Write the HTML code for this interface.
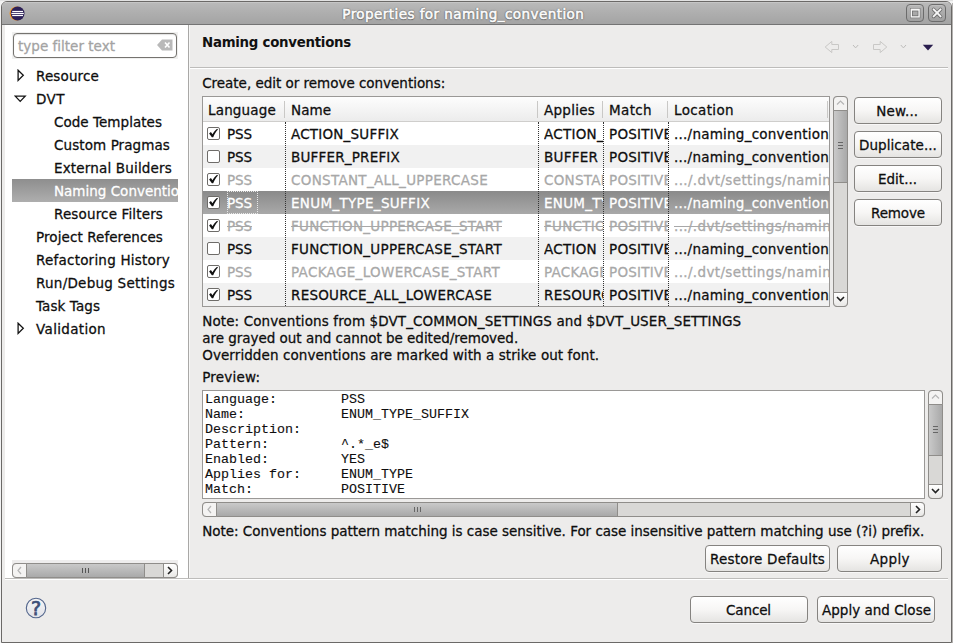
<!DOCTYPE html>
<html><head><meta charset="utf-8"><title>Properties for naming_convention</title>
<style>
html,body{margin:0;padding:0;background:#fff;}
body{width:953px;height:643px;overflow:hidden;position:relative;font-family:'DejaVu Sans','Liberation Sans',sans-serif;}
#win{position:absolute;left:0;top:0;width:953px;height:643px;overflow:hidden;}
#win div,#win span,#win svg{position:absolute;box-sizing:border-box;}
#win span{white-space:pre;-webkit-text-stroke:0.27px;}
.btn{border:1px solid #858380;border-radius:4px;background:linear-gradient(#ffffff,#f7f6f5 50%,#e5e4e2);box-shadow:0 1px 0 rgba(255,255,255,.6);}
.strike{text-decoration:line-through;}

</style></head><body>
<div id="win">
<div style="left:0px;top:0px;width:953px;height:643px;background:#f3f3f3;"></div>
<div style="left:0px;top:0px;width:953px;height:1px;background:#e2e2e2;"></div>
<div style="left:952px;top:3px;width:1px;height:640px;background:#b4b2b0;"></div>
<div style="left:1px;top:1px;width:951px;height:642px;background:#edeceb;border:1px solid #6b6967;border-radius:6px 6px 0 0;"></div>
<div style="left:2px;top:2px;width:949px;height:23px;background:linear-gradient(#c6c6c6 0,#c6c6c6 1px,#b9b9b9 1px,#aeaeae 50%,#a4a4a4);border-radius:5px 5px 0 0;border-bottom:1px solid #747474;"></div>
<svg style="left:9px;top:6.4px" width="16" height="15" viewBox="0 0 16 15"><circle cx="7.6" cy="7.5" r="7" fill="#f7941e"/><circle cx="8.6" cy="7.5" r="6.9" fill="#2c2058"/><rect x="3.2" y="4.9" width="10.8" height="1.2" fill="#fff"/><rect x="2.4" y="6.9" width="12.4" height="1.2" fill="#fff"/><rect x="3.2" y="8.9" width="10.8" height="1.2" fill="#fff"/></svg>
<div style="left:906px;top:4px;width:18px;height:18px;border:1px solid #6c6c6c;border-radius:4px;background:linear-gradient(#b6b6b6,#a0a0a0);box-shadow:inset 0 1px 0 #c0c0c0;"></div>
<svg style="left:906px;top:4px" width="18" height="18" viewBox="0 0 18 18"><rect x="4" y="4" width="10.4" height="10.2" fill="#707070"/><rect x="4.6" y="4.6" width="9.2" height="9" fill="#f6f6f6"/><rect x="6" y="6.6" width="6.4" height="5.6" fill="#707070"/><rect x="6.8" y="7.4" width="4.8" height="4" fill="#a9a9a9"/></svg>
<div style="left:928px;top:4px;width:18px;height:18px;border:1px solid #6c6c6c;border-radius:4px;background:linear-gradient(#b6b6b6,#a0a0a0);box-shadow:inset 0 1px 0 #c0c0c0;"></div>
<svg style="left:928px;top:4px" width="18" height="18" viewBox="0 0 18 18"><path d="M5.6 5.4 L12.6 12.4 M12.6 5.4 L5.6 12.4" stroke="#6f6f6f" stroke-width="3.6" stroke-linecap="round" fill="none"/><path d="M5.6 5.4 L12.6 12.4 M12.6 5.4 L5.6 12.4" stroke="#f6f6f6" stroke-width="2" stroke-linecap="round" fill="none"/></svg>
<div style="left:5px;top:25px;width:183px;height:553px;background:#fff;"></div>
<div style="left:188px;top:25px;width:1px;height:553px;background:#a9a8a6;"></div>
<div style="left:189px;top:25px;width:1px;height:553px;background:#f7f7f6;"></div>
<div style="left:12px;top:32px;width:166px;height:27px;background:#f0f0ef;"></div>
<div style="left:13px;top:33px;width:164px;height:25px;border:1px solid #75736f;border-radius:4px;background:#fff;box-shadow:inset 0 1px 1px rgba(0,0,0,.12);"></div>
<svg style="left:156px;top:38px" width="18" height="14" viewBox="0 0 18 14"><path d="M1 7 L6 1.5 H16.5 V12.5 H6 Z" fill="#b9b9b9"/><path d="M9 4.5 L13.5 9.5 M13.5 4.5 L9 9.5" stroke="#fff" stroke-width="1.6"/></svg>
<div style="left:12px;top:179px;width:166px;height:23px;background:linear-gradient(#8e8e8e,#aeaeae);"></div>
<svg style="left:16.5px;top:69px" width="9" height="13" viewBox="0 0 9 13"><path d="M1.1 1.2 L6.3 6.3 L1.1 11.4 Z" fill="#fff" stroke="#141414" stroke-width="1.3" stroke-linejoin="miter"/></svg>
<svg style="left:13.5px;top:94.5px" width="13" height="9" viewBox="0 0 13 9"><path d="M1.2 1.1 L11.2 1.1 L6.2 6.4 Z" fill="#fff" stroke="#141414" stroke-width="1.3" stroke-linejoin="miter"/></svg>
<svg style="left:16.5px;top:322px" width="9" height="13" viewBox="0 0 9 13"><path d="M1.1 1.2 L6.3 6.3 L1.1 11.4 Z" fill="#fff" stroke="#141414" stroke-width="1.3" stroke-linejoin="miter"/></svg>
<div style="left:12px;top:560px;width:166px;height:4px;background:#eeeded;"></div>
<div style="left:12px;top:563px;width:166px;height:15px;border:1px solid #8f8d8a;border-radius:4px;background:#d9d8d6;"></div>
<div style="left:26px;top:563px;width:119px;height:15px;border:1px solid #8f8d8a;background:linear-gradient(#c9c9c9,#a9a9a9);"></div>
<div style="left:12px;top:563px;width:15px;height:15px;border:1px solid #8f8d8a;border-radius:4px 0 0 4px;background:#f4f3f2;"></div>
<div style="left:163px;top:563px;width:15px;height:15px;border:1px solid #8f8d8a;border-radius:0 4px 4px 0;background:linear-gradient(#ffffff,#e9e8e6);"></div>
<svg style="left:12px;top:563px" width="166" height="15" viewBox="0 0 166 15"><path d="M9 4 L6 7.5 L9 11" stroke="#b5b5b5" stroke-width="1.2" fill="none"/><path d="M156 4 L159.5 7.5 L156 11" stroke="#222" stroke-width="1.6" fill="none"/><path d="M70.5 5 V10 M73.5 5 V10 M76.5 5 V10" stroke="#555" stroke-width="1"/></svg>
<div style="left:5px;top:578px;width:943px;height:1px;background:#bdbcba;"></div>
<div style="left:5px;top:579px;width:943px;height:1px;background:#ffffff;"></div>
<svg style="left:24px;top:596px" width="24" height="24" viewBox="0 0 24 24"><defs><linearGradient id="hg" x1="0" y1="0" x2="0" y2="1"><stop offset="0" stop-color="#f6f6f7"/><stop offset="1" stop-color="#e1e2e8"/></linearGradient></defs><circle cx="12" cy="12" r="9.7" fill="url(#hg)" stroke="#51648b" stroke-width="1.1"/></svg>
<div style="left:190px;top:67px;width:758px;height:1px;background:#bdbcba;"></div>
<div style="left:190px;top:68px;width:758px;height:1px;background:#ffffff;"></div>
<svg style="left:810px;top:25px" width="140" height="50" viewBox="0 0 140 50"><path d="M15.2 22 L21.8 16.4 V19.5 H28.5 V24.5 H21.8 V27.6 Z" fill="none" stroke="#c9c8c6" stroke-width="1"/><path d="M43 20 L45.6 22.9 L48.2 20" fill="none" stroke="#bdbcba" stroke-width="1"/><path d="M76.8 22 L70.2 16.4 V19.5 H63.5 V24.5 H70.2 V27.6 Z" fill="none" stroke="#c9c8c6" stroke-width="1"/><path d="M90.8 20 L93.4 22.9 L96 20" fill="none" stroke="#bdbcba" stroke-width="1"/><path d="M112.8 19.8 H123.2 L118 25.4 Z" fill="#2a1e4e"/></svg>
<div style="left:202px;top:96px;width:628px;height:211px;border:1px solid #9a9896;background:#fff;"></div>
<div style="left:203px;top:97px;width:626px;height:25px;background:linear-gradient(#fdfdfd,#ececec);border-bottom:1px solid #cfcecc;"></div>
<div style="left:207px;top:127px;width:13px;height:13px;border:1px solid #6e6c69;border-radius:2px;background:#fff;"></div>
<svg style="left:207px;top:126px" width="14" height="14" viewBox="0 0 14 14"><path d="M2.1 7.5 L3.9 6 L5.5 8.2 C6.6 6.2 8.2 4.2 10.1 2.7 L11 3.6 C9.1 5.6 7.4 8.2 6.2 11.2 L4.9 11.2 Z" fill="#111"/></svg>
<div style="left:203px;top:145px;width:626px;height:23px;background:#f1f1f1;"></div>
<div style="left:207px;top:150px;width:13px;height:13px;border:1px solid #6e6c69;border-radius:2px;background:#fff;"></div>
<div style="left:207px;top:173px;width:13px;height:13px;border:1px solid #6e6c69;border-radius:2px;background:#fff;"></div>
<svg style="left:207px;top:172px" width="14" height="14" viewBox="0 0 14 14"><path d="M2.1 7.5 L3.9 6 L5.5 8.2 C6.6 6.2 8.2 4.2 10.1 2.7 L11 3.6 C9.1 5.6 7.4 8.2 6.2 11.2 L4.9 11.2 Z" fill="#111"/></svg>
<div style="left:203px;top:191px;width:626px;height:23px;background:linear-gradient(#8a8a8a,#a9a9a9);"></div>
<div style="left:207px;top:196px;width:13px;height:13px;border:1px solid #6e6c69;border-radius:2px;background:#fff;"></div>
<svg style="left:207px;top:195px" width="14" height="14" viewBox="0 0 14 14"><path d="M2.1 7.5 L3.9 6 L5.5 8.2 C6.6 6.2 8.2 4.2 10.1 2.7 L11 3.6 C9.1 5.6 7.4 8.2 6.2 11.2 L4.9 11.2 Z" fill="#111"/></svg>
<div style="left:207px;top:219px;width:13px;height:13px;border:1px solid #6e6c69;border-radius:2px;background:#fff;"></div>
<svg style="left:207px;top:218px" width="14" height="14" viewBox="0 0 14 14"><path d="M2.1 7.5 L3.9 6 L5.5 8.2 C6.6 6.2 8.2 4.2 10.1 2.7 L11 3.6 C9.1 5.6 7.4 8.2 6.2 11.2 L4.9 11.2 Z" fill="#111"/></svg>
<div style="left:203px;top:237px;width:626px;height:23px;background:#f1f1f1;"></div>
<div style="left:207px;top:242px;width:13px;height:13px;border:1px solid #6e6c69;border-radius:2px;background:#fff;"></div>
<div style="left:207px;top:265px;width:13px;height:13px;border:1px solid #6e6c69;border-radius:2px;background:#fff;"></div>
<svg style="left:207px;top:264px" width="14" height="14" viewBox="0 0 14 14"><path d="M2.1 7.5 L3.9 6 L5.5 8.2 C6.6 6.2 8.2 4.2 10.1 2.7 L11 3.6 C9.1 5.6 7.4 8.2 6.2 11.2 L4.9 11.2 Z" fill="#111"/></svg>
<div style="left:203px;top:283px;width:626px;height:23px;background:#f1f1f1;"></div>
<div style="left:207px;top:288px;width:13px;height:13px;border:1px solid #6e6c69;border-radius:2px;background:#fff;"></div>
<svg style="left:207px;top:287px" width="14" height="14" viewBox="0 0 14 14"><path d="M2.1 7.5 L3.9 6 L5.5 8.2 C6.6 6.2 8.2 4.2 10.1 2.7 L11 3.6 C9.1 5.6 7.4 8.2 6.2 11.2 L4.9 11.2 Z" fill="#111"/></svg>
<div style="left:284px;top:101px;width:1px;height:17px;background:#c9c8c6;"></div>
<div style="left:285px;top:122px;width:1px;height:184px;border-left:1px dotted #333;"></div>
<div style="left:537px;top:101px;width:1px;height:17px;background:#c9c8c6;"></div>
<div style="left:538px;top:122px;width:1px;height:184px;border-left:1px dotted #333;"></div>
<div style="left:602px;top:101px;width:1px;height:17px;background:#c9c8c6;"></div>
<div style="left:603px;top:122px;width:1px;height:184px;border-left:1px dotted #333;"></div>
<div style="left:667px;top:101px;width:1px;height:17px;background:#c9c8c6;"></div>
<div style="left:668px;top:122px;width:1px;height:184px;border-left:1px dotted #333;"></div>
<div style="left:827px;top:101px;width:1px;height:17px;background:#c9c8c6;"></div>
<div style="left:227px;top:191px;width:31px;height:23px;border:1px dotted #e8e8e8;"></div>
<div style="left:833px;top:96px;width:15px;height:211px;border:1px solid #8f8d8a;border-radius:4px;background:#d9d8d6;"></div>
<div style="left:833px;top:110px;width:15px;height:73px;border:1px solid #8f8d8a;background:linear-gradient(90deg,#c9c9c9,#a9a9a9);"></div>
<div style="left:833px;top:96px;width:15px;height:15px;border:1px solid #8f8d8a;border-radius:4px 4px 0 0;background:#f4f3f2;"></div>
<div style="left:833px;top:292px;width:15px;height:15px;border:1px solid #8f8d8a;border-radius:0 0 4px 4px;background:linear-gradient(#ffffff,#e9e8e6);"></div>
<svg style="left:833px;top:96px" width="15" height="211" viewBox="0 0 15 211"><path d="M4 8.5 L7.5 5 L11 8.5" stroke="#b5b5b5" stroke-width="1.2" fill="none"/><path d="M4 201 L7.5 204.5 L11 201" stroke="#222" stroke-width="1.6" fill="none"/><path d="M5 46.5 H10 M5 49.5 H10 M5 52.5 H10" stroke="#666" stroke-width="1"/></svg>
<div class="btn" style="left:854px;top:97px;width:88px;height:27px"></div>
<div class="btn" style="left:854px;top:131px;width:88px;height:27px"></div>
<div class="btn" style="left:854px;top:165px;width:88px;height:27px"></div>
<div class="btn" style="left:854px;top:199px;width:88px;height:27px"></div>
<div style="left:202px;top:390px;width:723px;height:109px;border:1px solid #9a9896;background:#fff;"></div>
<div style="left:928px;top:390px;width:15px;height:109px;border:1px solid #8f8d8a;border-radius:4px;background:#d9d8d6;"></div>
<div style="left:928px;top:404px;width:15px;height:52px;border:1px solid #8f8d8a;background:linear-gradient(90deg,#c9c9c9,#a9a9a9);"></div>
<div style="left:928px;top:390px;width:15px;height:15px;border:1px solid #8f8d8a;border-radius:4px 4px 0 0;background:#f4f3f2;"></div>
<div style="left:928px;top:484px;width:15px;height:15px;border:1px solid #8f8d8a;border-radius:0 0 4px 4px;background:linear-gradient(#ffffff,#e9e8e6);"></div>
<svg style="left:928px;top:390px" width="15" height="109" viewBox="0 0 15 109"><path d="M4 8.5 L7.5 5 L11 8.5" stroke="#b5b5b5" stroke-width="1.2" fill="none"/><path d="M4 99 L7.5 102.5 L11 99" stroke="#222" stroke-width="1.6" fill="none"/><path d="M5 36.5 H10 M5 39.5 H10 M5 42.5 H10" stroke="#666" stroke-width="1"/></svg>
<div style="left:202px;top:502px;width:723px;height:15px;border:1px solid #8f8d8a;border-radius:4px;background:#d9d8d6;"></div>
<div style="left:216px;top:502px;width:402px;height:15px;border:1px solid #8f8d8a;background:linear-gradient(#c9c9c9,#a9a9a9);"></div>
<div style="left:202px;top:502px;width:15px;height:15px;border:1px solid #8f8d8a;border-radius:4px 0 0 4px;background:#f4f3f2;"></div>
<div style="left:910px;top:502px;width:15px;height:15px;border:1px solid #8f8d8a;border-radius:0 4px 4px 0;background:linear-gradient(#ffffff,#e9e8e6);"></div>
<svg style="left:202px;top:502px" width="723" height="15" viewBox="0 0 723 15"><path d="M9 4 L6 7.5 L9 11" stroke="#b5b5b5" stroke-width="1.2" fill="none"/><path d="M714 4 L717.5 7.5 L714 11" stroke="#222" stroke-width="1.6" fill="none"/><path d="M212.5 5 V10 M215.5 5 V10 M218.5 5 V10" stroke="#666" stroke-width="1"/></svg>
<div class="btn" style="left:705px;top:545px;width:125px;height:27px"></div>
<div class="btn" style="left:837px;top:545px;width:105px;height:27px"></div>
<div class="btn" style="left:690px;top:596px;width:118px;height:27px"></div>
<div class="btn" style="left:817px;top:596px;width:118px;height:27px"></div>
<span style="left:342.3px;top:4.33px;font-size:13.5px;color:#fcfcfc;line-height:20px;letter-spacing:0.439px;-webkit-text-stroke:0.55px;text-shadow:0 1px 1px #5e5e5e,0 -1px 1px #8a8a8a,1px 0 1px #808080,-1px 0 1px #808080;">Properties for naming_convention</span>
<span style="left:18px;top:36.33px;font-size:13.5px;color:#a3a3a3;line-height:20px;letter-spacing:0.013px;">type filter text</span>
<span style="left:36px;top:66.33px;font-size:13.5px;color:#0e0e0e;line-height:20px;letter-spacing:0.135px;">Resource</span>
<span style="left:36px;top:89.33px;font-size:13.5px;color:#0e0e0e;line-height:20px;letter-spacing:0.453px;">DVT</span>
<span style="left:54px;top:112.33px;font-size:13.5px;color:#0e0e0e;line-height:20px;letter-spacing:0.036px;">Code Templates</span>
<span style="left:54px;top:135.33px;font-size:13.5px;color:#0e0e0e;line-height:20px;letter-spacing:0.088px;">Custom Pragmas</span>
<span style="left:54px;top:158.33px;font-size:13.5px;color:#0e0e0e;line-height:20px;letter-spacing:0.171px;">External Builders</span>
<span style="left:54px;top:181.33px;font-size:13.5px;color:#fff;line-height:20px;width:124px;overflow:hidden;">Naming Conventions</span>
<span style="left:54px;top:204.33px;font-size:13.5px;color:#0e0e0e;line-height:20px;letter-spacing:0.146px;">Resource Filters</span>
<span style="left:36px;top:227.33px;font-size:13.5px;color:#0e0e0e;line-height:20px;letter-spacing:0.083px;">Project References</span>
<span style="left:36px;top:250.33px;font-size:13.5px;color:#0e0e0e;line-height:20px;letter-spacing:0.220px;">Refactoring History</span>
<span style="left:36px;top:273.33px;font-size:13.5px;color:#0e0e0e;line-height:20px;letter-spacing:0.250px;">Run/Debug Settings</span>
<span style="left:36px;top:296.33px;font-size:13.5px;color:#0e0e0e;line-height:20px;letter-spacing:0.075px;">Task Tags</span>
<span style="left:36px;top:319.33px;font-size:13.5px;color:#0e0e0e;line-height:20px;letter-spacing:0.333px;">Validation</span>
<span style="left:31.0px;top:598.43px;font-size:19px;color:#3e5078;line-height:20px;-webkit-text-stroke:0.75px;">?</span>
<span style="left:202px;top:33.39px;font-size:13.33px;color:#111;line-height:20px;font-weight:700;letter-spacing:-0.253px;-webkit-text-stroke:0;">Naming conventions</span>
<span style="left:202.2px;top:73.33px;font-size:13.5px;color:#0e0e0e;line-height:20px;letter-spacing:-0.024px;">Create, edit or remove conventions:</span>
<span style="left:227px;top:124.33px;font-size:13.5px;color:#0e0e0e;line-height:20px;letter-spacing:-0.094px;">PSS</span>
<span style="left:291px;top:124.33px;font-size:13.5px;color:#0e0e0e;line-height:20px;letter-spacing:0.204px;">ACTION_SUFFIX</span>
<span style="left:544px;top:124.33px;font-size:13.5px;color:#0e0e0e;line-height:20px;width:59px;overflow:hidden;letter-spacing:0.25px;">ACTION_SUFFIX</span>
<span style="left:609px;top:124.33px;font-size:13.5px;color:#0e0e0e;line-height:20px;width:59px;overflow:hidden;letter-spacing:0.25px;">POSITIVE</span>
<span style="left:674px;top:124.33px;font-size:13.5px;color:#0e0e0e;line-height:20px;letter-spacing:0.239px;width:155px;overflow:hidden;">.../naming_convention</span>
<span style="left:227px;top:147.33px;font-size:13.5px;color:#0e0e0e;line-height:20px;letter-spacing:-0.094px;">PSS</span>
<span style="left:291px;top:147.33px;font-size:13.5px;color:#0e0e0e;line-height:20px;letter-spacing:0.201px;">BUFFER_PREFIX</span>
<span style="left:544px;top:147.33px;font-size:13.5px;color:#0e0e0e;line-height:20px;width:59px;overflow:hidden;letter-spacing:0.25px;">BUFFER</span>
<span style="left:609px;top:147.33px;font-size:13.5px;color:#0e0e0e;line-height:20px;width:59px;overflow:hidden;letter-spacing:0.25px;">POSITIVE</span>
<span style="left:674px;top:147.33px;font-size:13.5px;color:#0e0e0e;line-height:20px;letter-spacing:0.239px;width:155px;overflow:hidden;">.../naming_convention</span>
<span style="left:227px;top:170.33px;font-size:13.5px;color:#a8a8a8;line-height:20px;letter-spacing:-0.094px;">PSS</span>
<span style="left:291px;top:170.33px;font-size:13.5px;color:#a8a8a8;line-height:20px;letter-spacing:0.298px;">CONSTANT_ALL_UPPERCASE</span>
<span style="left:544px;top:170.33px;font-size:13.5px;color:#a8a8a8;line-height:20px;width:59px;overflow:hidden;letter-spacing:0.25px;">CONSTANT</span>
<span style="left:609px;top:170.33px;font-size:13.5px;color:#a8a8a8;line-height:20px;width:59px;overflow:hidden;letter-spacing:0.25px;">POSITIVE</span>
<span style="left:674px;top:170.33px;font-size:13.5px;color:#a8a8a8;line-height:20px;letter-spacing:0.360px;width:155px;overflow:hidden;">.../.dvt/settings/naming</span>
<span style="left:227px;top:193.33px;font-size:13.5px;color:#ffffff;line-height:20px;letter-spacing:-0.094px;">PSS</span>
<span style="left:291px;top:193.33px;font-size:13.5px;color:#ffffff;line-height:20px;letter-spacing:0.311px;">ENUM_TYPE_SUFFIX</span>
<span style="left:544px;top:193.33px;font-size:13.5px;color:#ffffff;line-height:20px;width:59px;overflow:hidden;letter-spacing:0.25px;">ENUM_TYPE</span>
<span style="left:609px;top:193.33px;font-size:13.5px;color:#ffffff;line-height:20px;width:59px;overflow:hidden;letter-spacing:0.25px;">POSITIVE</span>
<span style="left:674px;top:193.33px;font-size:13.5px;color:#ffffff;line-height:20px;letter-spacing:0.239px;width:155px;overflow:hidden;">.../naming_convention</span>
<span style="left:227px;top:216.33px;font-size:13.5px;color:#a8a8a8;line-height:20px;letter-spacing:-0.094px;text-decoration:line-through;">PSS</span>
<span style="left:291px;top:216.33px;font-size:13.5px;color:#a8a8a8;line-height:20px;letter-spacing:0.273px;text-decoration:line-through;">FUNCTION_UPPERCASE_START</span>
<span style="left:544px;top:216.33px;font-size:13.5px;color:#a8a8a8;line-height:20px;width:59px;overflow:hidden;text-decoration:line-through;letter-spacing:0.25px;">FUNCTION</span>
<span style="left:609px;top:216.33px;font-size:13.5px;color:#a8a8a8;line-height:20px;width:59px;overflow:hidden;text-decoration:line-through;letter-spacing:0.25px;">POSITIVE</span>
<span style="left:674px;top:216.33px;font-size:13.5px;color:#a8a8a8;line-height:20px;letter-spacing:0.360px;width:155px;overflow:hidden;text-decoration:line-through;">.../.dvt/settings/naming</span>
<span style="left:227px;top:239.33px;font-size:13.5px;color:#0e0e0e;line-height:20px;letter-spacing:-0.094px;">PSS</span>
<span style="left:291px;top:239.33px;font-size:13.5px;color:#0e0e0e;line-height:20px;letter-spacing:0.273px;">FUNCTION_UPPERCASE_START</span>
<span style="left:544px;top:239.33px;font-size:13.5px;color:#0e0e0e;line-height:20px;width:59px;overflow:hidden;letter-spacing:0.25px;">ACTION</span>
<span style="left:609px;top:239.33px;font-size:13.5px;color:#0e0e0e;line-height:20px;width:59px;overflow:hidden;letter-spacing:0.25px;">POSITIVE</span>
<span style="left:674px;top:239.33px;font-size:13.5px;color:#0e0e0e;line-height:20px;letter-spacing:0.239px;width:155px;overflow:hidden;">.../naming_convention</span>
<span style="left:227px;top:262.33px;font-size:13.5px;color:#a8a8a8;line-height:20px;letter-spacing:-0.094px;">PSS</span>
<span style="left:291px;top:262.33px;font-size:13.5px;color:#a8a8a8;line-height:20px;letter-spacing:0.327px;">PACKAGE_LOWERCASE_START</span>
<span style="left:544px;top:262.33px;font-size:13.5px;color:#a8a8a8;line-height:20px;width:59px;overflow:hidden;letter-spacing:0.25px;">PACKAGE</span>
<span style="left:609px;top:262.33px;font-size:13.5px;color:#a8a8a8;line-height:20px;width:59px;overflow:hidden;letter-spacing:0.25px;">POSITIVE</span>
<span style="left:674px;top:262.33px;font-size:13.5px;color:#a8a8a8;line-height:20px;letter-spacing:0.360px;width:155px;overflow:hidden;">.../.dvt/settings/naming</span>
<span style="left:227px;top:285.33px;font-size:13.5px;color:#0e0e0e;line-height:20px;letter-spacing:-0.094px;">PSS</span>
<span style="left:291px;top:285.33px;font-size:13.5px;color:#0e0e0e;line-height:20px;letter-spacing:0.252px;">RESOURCE_ALL_LOWERCASE</span>
<span style="left:544px;top:285.33px;font-size:13.5px;color:#0e0e0e;line-height:20px;width:59px;overflow:hidden;letter-spacing:0.25px;">RESOURCE</span>
<span style="left:609px;top:285.33px;font-size:13.5px;color:#0e0e0e;line-height:20px;width:59px;overflow:hidden;letter-spacing:0.25px;">POSITIVE</span>
<span style="left:674px;top:285.33px;font-size:13.5px;color:#0e0e0e;line-height:20px;letter-spacing:0.239px;width:155px;overflow:hidden;">.../naming_convention</span>
<span style="left:208px;top:100.33px;font-size:13.5px;color:#0e0e0e;line-height:20px;letter-spacing:0.172px;">Language</span>
<span style="left:291px;top:100.33px;font-size:13.5px;color:#0e0e0e;line-height:20px;letter-spacing:0.043px;">Name</span>
<span style="left:544px;top:100.33px;font-size:13.5px;color:#0e0e0e;line-height:20px;letter-spacing:0.254px;">Applies</span>
<span style="left:609px;top:100.33px;font-size:13.5px;color:#0e0e0e;line-height:20px;letter-spacing:0.359px;">Match</span>
<span style="left:674px;top:100.33px;font-size:13.5px;color:#0e0e0e;line-height:20px;letter-spacing:0.361px;">Location</span>
<span style="left:876.3px;top:101.33px;font-size:13.5px;color:#0e0e0e;line-height:20px;letter-spacing:0.151px;">New...</span>
<span style="left:859px;top:135.33px;font-size:13.5px;color:#0e0e0e;line-height:20px;letter-spacing:0.066px;">Duplicate...</span>
<span style="left:878px;top:169.33px;font-size:13.5px;color:#0e0e0e;line-height:20px;letter-spacing:-0.004px;">Edit...</span>
<span style="left:871px;top:203.33px;font-size:13.5px;color:#0e0e0e;line-height:20px;letter-spacing:-0.133px;">Remove</span>
<span style="left:202.2px;top:311.33px;font-size:13.5px;color:#0e0e0e;line-height:20px;letter-spacing:0.112px;">Note: Conventions from $DVT_COMMON_SETTINGS and $DVT_USER_SETTINGS</span>
<span style="left:202.2px;top:328.33px;font-size:13.5px;color:#0e0e0e;line-height:20px;letter-spacing:-0.024px;">are grayed out and cannot be edited/removed.</span>
<span style="left:202.2px;top:345.33px;font-size:13.5px;color:#0e0e0e;line-height:20px;letter-spacing:0.082px;">Overridden conventions are marked with a strike out font.</span>
<span style="left:202.2px;top:367.33px;font-size:13.5px;color:#0e0e0e;line-height:20px;letter-spacing:0.203px;">Preview:</span>
<span style="left:205px;top:390.39px;font-size:13.33px;color:#0e0e0e;line-height:20px;font-family:'Liberation Mono','DejaVu Sans Mono',monospace;-webkit-text-stroke:0.1px;">Language:</span>
<span style="left:341px;top:390.39px;font-size:13.33px;color:#0e0e0e;line-height:20px;font-family:'Liberation Mono','DejaVu Sans Mono',monospace;-webkit-text-stroke:0.1px;">PSS</span>
<span style="left:205px;top:405.39px;font-size:13.33px;color:#0e0e0e;line-height:20px;font-family:'Liberation Mono','DejaVu Sans Mono',monospace;-webkit-text-stroke:0.1px;">Name:</span>
<span style="left:341px;top:405.39px;font-size:13.33px;color:#0e0e0e;line-height:20px;font-family:'Liberation Mono','DejaVu Sans Mono',monospace;-webkit-text-stroke:0.1px;">ENUM_TYPE_SUFFIX</span>
<span style="left:205px;top:420.39px;font-size:13.33px;color:#0e0e0e;line-height:20px;font-family:'Liberation Mono','DejaVu Sans Mono',monospace;-webkit-text-stroke:0.1px;">Description:</span>
<span style="left:205px;top:435.39px;font-size:13.33px;color:#0e0e0e;line-height:20px;font-family:'Liberation Mono','DejaVu Sans Mono',monospace;-webkit-text-stroke:0.1px;">Pattern:</span>
<span style="left:341px;top:435.39px;font-size:13.33px;color:#0e0e0e;line-height:20px;font-family:'Liberation Mono','DejaVu Sans Mono',monospace;-webkit-text-stroke:0.1px;">^.*_e$</span>
<span style="left:205px;top:450.39px;font-size:13.33px;color:#0e0e0e;line-height:20px;font-family:'Liberation Mono','DejaVu Sans Mono',monospace;-webkit-text-stroke:0.1px;">Enabled:</span>
<span style="left:341px;top:450.39px;font-size:13.33px;color:#0e0e0e;line-height:20px;font-family:'Liberation Mono','DejaVu Sans Mono',monospace;-webkit-text-stroke:0.1px;">YES</span>
<span style="left:205px;top:465.39px;font-size:13.33px;color:#0e0e0e;line-height:20px;font-family:'Liberation Mono','DejaVu Sans Mono',monospace;-webkit-text-stroke:0.1px;">Applies for:</span>
<span style="left:341px;top:465.39px;font-size:13.33px;color:#0e0e0e;line-height:20px;font-family:'Liberation Mono','DejaVu Sans Mono',monospace;-webkit-text-stroke:0.1px;">ENUM_TYPE</span>
<span style="left:205px;top:480.39px;font-size:13.33px;color:#0e0e0e;line-height:20px;font-family:'Liberation Mono','DejaVu Sans Mono',monospace;-webkit-text-stroke:0.1px;">Match:</span>
<span style="left:341px;top:480.39px;font-size:13.33px;color:#0e0e0e;line-height:20px;font-family:'Liberation Mono','DejaVu Sans Mono',monospace;-webkit-text-stroke:0.1px;">POSITIVE</span>
<span style="left:202.2px;top:521.33px;font-size:13.5px;color:#0e0e0e;line-height:20px;letter-spacing:-0.035px;">Note: Conventions pattern matching is case sensitive. For case insensitive pattern matching use (?i) prefix.</span>
<span style="left:710px;top:549.33px;font-size:13.5px;color:#0e0e0e;line-height:20px;letter-spacing:0.194px;">Restore Defaults</span>
<span style="left:870px;top:549.33px;font-size:13.5px;color:#0e0e0e;line-height:20px;letter-spacing:0.375px;">Apply</span>
<span style="left:726px;top:600.33px;font-size:13.5px;color:#0e0e0e;line-height:20px;letter-spacing:-0.122px;">Cancel</span>
<span style="left:822px;top:600.33px;font-size:13.5px;color:#0e0e0e;line-height:20px;letter-spacing:0.008px;">Apply and Close</span>
</div>
</body></html>
